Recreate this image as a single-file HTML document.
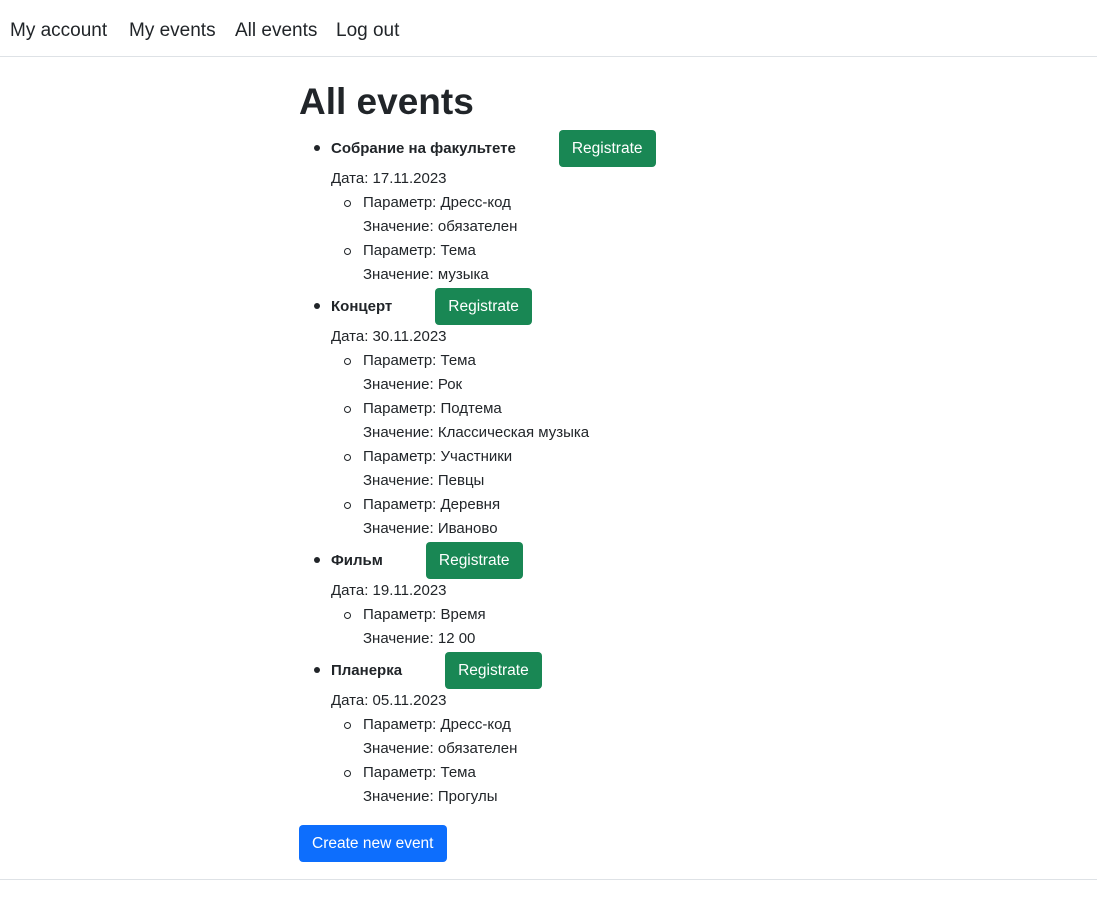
<!DOCTYPE html>
<html><head><meta charset="utf-8"><style>
body{margin:0;font-family:"Liberation Sans",sans-serif;color:#212529;background:#fff;}
.nav{height:56px;border-bottom:1px solid #dee2e6;position:relative;}
.nav a{position:absolute;top:18px;font-size:19px;line-height:26px;color:#212529;text-decoration:none;}
.c{position:absolute;left:299px;top:58px;width:700px;}
h1{margin:20px 0 0;font-size:37px;line-height:48px;font-weight:bold;}
.row{position:relative;height:38px;display:flex;align-items:center;padding-left:32px;font-size:15px;font-weight:bold;}
.row:before{content:"";position:absolute;left:15px;top:16px;width:6px;height:6px;border-radius:50%;background:#212529;}
.btn{display:inline-block;height:37px;line-height:37px;padding:0 13px;border-radius:4px;color:#fff;font-size:15.5px;font-weight:normal;box-sizing:border-box;}
.g{background:#198754;margin-left:43px;}
.b{background:#0d6efd;}
.l{font-size:15px;line-height:24px;padding-left:32px;}
.p{font-size:15px;line-height:24px;padding-left:64px;position:relative;}
.p.s:before{content:"";position:absolute;left:45px;top:9px;width:5px;height:5px;border:1px solid #212529;border-radius:50%;}
hr{position:absolute;top:879px;left:0;width:100%;margin:0;border:0;border-top:1px solid #dee2e6;}
</style></head><body>
<div class="nav"><a style="left:10px">My account</a><a style="left:129px">My events</a><a style="left:235px">All events</a><a style="left:336px">Log out</a></div>
<div class="c">
<h1>All events</h1>
<div style="height:3px"></div>
<div class="row">Собрание на факультете<span class="btn g">Registrate</span></div>
<div class="l">Дата: 17.11.2023</div>
<div class="p s">Параметр: Дресс-код</div><div class="p">Значение: обязателен</div>
<div class="p s">Параметр: Тема</div><div class="p">Значение: музыка</div>
<div class="row">Концерт<span class="btn g">Registrate</span></div>
<div class="l">Дата: 30.11.2023</div>
<div class="p s">Параметр: Тема</div><div class="p">Значение: Рок</div>
<div class="p s">Параметр: Подтема</div><div class="p">Значение: Классическая музыка</div>
<div class="p s">Параметр: Участники</div><div class="p">Значение: Певцы</div>
<div class="p s">Параметр: Деревня</div><div class="p">Значение: Иваново</div>
<div class="row">Фильм<span class="btn g">Registrate</span></div>
<div class="l">Дата: 19.11.2023</div>
<div class="p s">Параметр: Время</div><div class="p">Значение: 12 00</div>
<div class="row">Планерка<span class="btn g">Registrate</span></div>
<div class="l">Дата: 05.11.2023</div>
<div class="p s">Параметр: Дресс-код</div><div class="p">Значение: обязателен</div>
<div class="p s">Параметр: Тема</div><div class="p">Значение: Прогулы</div>
<div style="height:16px"></div>
<span class="btn b">Create new event</span>
</div>
<hr>
</body></html>
